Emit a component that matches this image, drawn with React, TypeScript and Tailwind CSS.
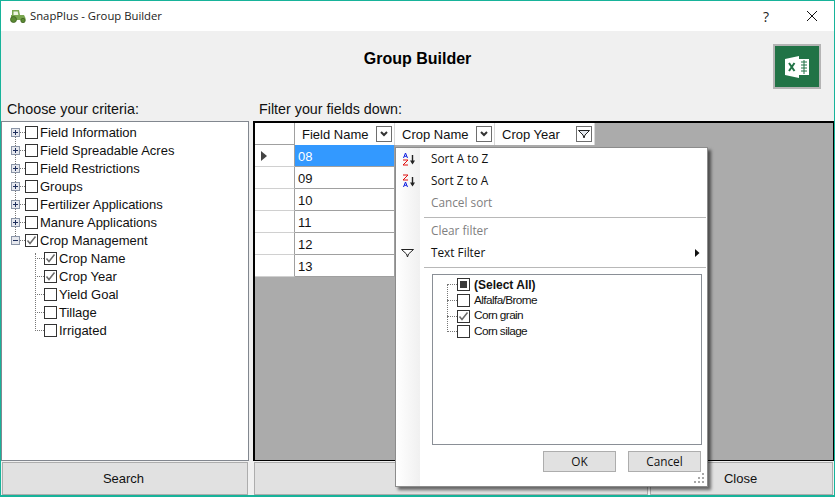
import React from 'react';

const sans = "font-['Liberation_Sans',Arial,sans-serif]";
const segoe = "font-['Open_Sans','Noto_Sans',sans-serif]";

function Check({ checked, square }: { checked?: boolean; square?: boolean }) {
    return (
        <span className="w-[13px] h-[13px] shrink-0 border border-[#333333] bg-white flex items-center justify-center">
            {checked && (
                <svg width="11" height="11" viewBox="0 0 11 11">
                    <path d="M1.5 5.5 L4 8.5 L9.5 1.5" fill="none" stroke="#6a6a6a" strokeWidth="1.5" />
                </svg>
            )}
            {square && <span className="w-[7px] h-[7px] bg-[#3a3a3a]" />}
        </span>
    );
}

function Expander({ open }: { open?: boolean }) {
    return (
        <span className="w-[9px] h-[9px] shrink-0 border border-[#8a94a6] bg-[#e6e8ee] relative">
            <span className="absolute left-[1px] top-[3px] w-[5px] h-[1px] bg-[#1f2f5c]" />
            {!open && <span className="absolute left-[3px] top-[1px] w-[1px] h-[5px] bg-[#1f2f5c]" />}
        </span>
    );
}

function TreeRow({ label, checked, open }: { label: string; checked?: boolean; open?: boolean }) {
    return (
        <div className="h-[18px] flex items-center">
            <Expander open={open} />
            <span className="w-[5px] shrink-0 border-t border-dotted border-[#777777]" />
            <Check checked={checked} />
            <span className="ml-[2px] pt-[2px] text-[#101010] whitespace-nowrap">{label}</span>
        </div>
    );
}

function SubRow({ label, checked }: { label: string; checked?: boolean }) {
    return (
        <div className="h-[18px] flex items-center pl-[24px]">
            <span className="w-[9px] shrink-0 border-t border-dotted border-[#777777]" />
            <Check checked={checked} />
            <span className="ml-[2px] pt-[2px] text-[#101010] whitespace-nowrap">{label}</span>
        </div>
    );
}

function DropBtn({ filter }: { filter?: boolean }) {
    return (
        <span className="w-[16px] h-[16px] shrink-0 border border-[#6e6e6e] bg-white flex items-center justify-center">
            {filter ? (
                <svg width="12" height="9" viewBox="0 0 12 9">
                    <path d="M0.5 0.5 H11.5 L7 5 L6 8 L5 5 Z" fill="#e4e8ee" stroke="#222222" strokeWidth="1" />
                </svg>
            ) : (
                <svg width="8" height="6" viewBox="0 0 8 6">
                    <path d="M1 1 L4 4 L7 1" fill="none" stroke="#333333" strokeWidth="2" />
                </svg>
            )}
        </span>
    );
}

function HeaderCell({ label, filter }: { label: string; filter?: boolean }) {
    return (
        <div className="w-[100px] h-[22px] bg-white border-r border-[#d8d8d8] flex items-center justify-between pl-[7px] pr-[2px]">
            <span className="pt-[2px] text-[#111111] whitespace-nowrap">{label}</span>
            <DropBtn filter={filter} />
        </div>
    );
}

function SortIcon({ reverse }: { reverse?: boolean }) {
    return (
        <svg width="14" height="14" viewBox="0 0 14 14">
            <path d={reverse ? "M1 1 H6 L1 6 H6" : "M1.5 6 L3.5 1 L5.5 6 M2.3 4.3 H4.7"} fill="none" stroke={reverse ? "#e01010" : "#1020e0"} strokeWidth="1" />
            <path d={reverse ? "M1.5 13 L3.5 8 L5.5 13 M2.3 11.3 H4.7" : "M1 8 H6 L1 13 H6"} fill="none" stroke={reverse ? "#1020e0" : "#e01010"} strokeWidth="1" />
            <path d="M10.5 3 V11" stroke="#222222" strokeWidth="1.4" />
            <path d="M8 8.5 H13 L10.5 12.5 Z" fill="#222222" />
        </svg>
    );
}

function FilterRow({ label, checked, square, bold }: { label: string; checked?: boolean; square?: boolean; bold?: boolean }) {
    return (
        <div className="h-[15.67px] flex items-center">
            <span className="w-[10px] shrink-0 border-t border-dotted border-[#777777]" />
            <Check checked={checked} square={square} />
            <span className={`ml-[4px] text-[11.8px] text-[#111111] whitespace-nowrap ${sans} ${bold ? 'font-bold text-[12px]' : 'tracking-[-0.6px]'}`}>{label}</span>
        </div>
    );
}

function FilterMenu() {
    return (
        <div className={`absolute left-[394px] top-[146px] w-[313px] h-[340px] bg-white border border-[#8c8c8c] shadow-[3px_3px_3px_rgba(0,0,0,0.55)] flex text-[11.8px] ${segoe}`}>
            <div className="w-[24px] h-[338px] bg-gradient-to-r from-white to-[#f0f0f0] flex flex-col items-center shrink-0">
                <div className="h-[22px] flex items-center pl-[1px]"><SortIcon /></div>
                <div className="h-[22px] flex items-center pl-[1px]"><SortIcon reverse /></div>
                <div className="h-[50px]" />
                <div className="h-[22px] flex items-center pr-[2px]">
                    <svg width="13" height="9" viewBox="0 0 13 9">
                        <path d="M0.5 0.5 H12.5 L7.5 5 L6.5 8 L5.5 5 Z" fill="#ffffff" stroke="#222222" strokeWidth="1" />
                    </svg>
                </div>
            </div>
            <div className="flex-1 flex flex-col pl-[8px] pr-[2px] relative">
                <div className="h-[22px] flex items-center pl-[3px] text-[#111111]">Sort A to Z</div>
                <div className="h-[22px] flex items-center pl-[3px] text-[#111111]">Sort Z to A</div>
                <div className="h-[22px] flex items-center pl-[3px] text-[#808080]">Cancel sort</div>
                <div className="h-[1px] mt-[3px] bg-[#b8b8b8] mr-[-1px] ml-[-4px]" />
                <div className="h-[22px] mt-[2px] flex items-center pl-[3px] text-[#808080]">Clear filter</div>
                <div className="h-[22px] flex items-center justify-between pl-[3px] pr-[5px] text-[#111111]">
                    Text Filter
                    <svg width="5" height="8" viewBox="0 0 5 8"><path d="M0 0 L4.5 4 L0 8 Z" fill="#111111" /></svg>
                </div>
                <div className="h-[1px] mt-[3px] bg-[#b8b8b8] mr-[-1px] ml-[-4px]" />
                <div className="relative mt-[6px] w-[270px] h-[171px] ml-[4px] border border-[#8a8f96] pl-[14px] pt-[2px]">
                    <span className="absolute left-[14px] top-[10px] h-[47px] border-l border-dotted border-[#777777]" />
                    <FilterRow label="(Select All)" square bold />
                    <FilterRow label="Alfalfa/Brome" />
                    <FilterRow label="Corn grain" checked />
                    <FilterRow label="Corn silage" />
                </div>
                <div className="flex justify-end gap-[12px] mt-[6px] pr-[4px]">
                    <button className="w-[73px] h-[21px] bg-[#e1e1e1] border border-[#adadad] text-[#111111]">OK</button>
                    <button className="w-[73px] h-[21px] bg-[#e1e1e1] border border-[#adadad] text-[#111111]">Cancel</button>
                </div>
            </div>
            <svg className="absolute right-[2px] bottom-[2px]" width="11" height="11" viewBox="0 0 11 11">
                <path d="M8 0h2v2H8zM4 4h2v2H4zM8 4h2v2H8zM0 8h2v2H0zM4 8h2v2H4zM8 8h2v2H8z" fill="#a8a8a8" />
            </svg>
        </div>
    );
}

export default function App() {
    const rows = ['08', '09', '10', '11', '12', '13'];

    return (
        <div className={`relative w-[835px] h-[497px] border border-[#17b39a] border-b-2 bg-[#f0f0f0] flex flex-col overflow-hidden text-[13px] ${sans}`}>
            <div className="h-[30px] bg-white flex items-center shrink-0">
                <svg className="ml-[8px] mt-[1px]" width="17" height="13" viewBox="0 0 17 13">
                    <path d="M3 0 H10 L11 5 H15 L16.5 8 V10 H2 V5 H3 Z" fill="#7aa650" />
                    <path d="M4.5 1.5 H8.7 L9.4 5 H4.5 Z" fill="#eef4e2" />
                    <circle cx="4.5" cy="9.5" r="3" fill="#5b8a33" stroke="#3c5f20" strokeWidth="0.8" />
                    <circle cx="14" cy="10.5" r="2.2" fill="#5b8a33" stroke="#3c5f20" strokeWidth="0.8" />
                </svg>
                <span className={`ml-[4px] text-[11.3px] text-[#222222] ${segoe}`}>SnapPlus - Group Builder</span>
                <span className={`ml-auto text-[14px] text-[#222222] ${segoe}`}>?</span>
                <svg className="ml-[37px] mr-[16px]" width="12" height="12" viewBox="0 0 12 12">
                    <path d="M1 1 L11 11 M11 1 L1 11" stroke="#111111" strokeWidth="1" />
                </svg>
            </div>

            <div className="h-[70px] shrink-0 relative flex items-center justify-center">
                <h1 className="text-[16px] font-bold text-black pb-[15px]">Group Builder</h1>
                <button className="absolute right-[13px] top-[13px] w-[48px] h-[45px] pl-[1px] border-2 border-[#b4b4b4] bg-[#217346] flex items-center justify-center">
                    <svg width="25" height="22" viewBox="0 0 25 22">
                        <path d="M14 3 H24 V19 H14 Z" fill="#ffffff" />
                        <path d="M16 6 H22 M16 9 H22 M16 12 H22 M16 15 H22 M19 4 V18" stroke="#217346" strokeWidth="1" />
                        <path d="M0 3 L14 0 V22 L0 19 Z" fill="#ffffff" />
                        <path d="M4 7 L9.5 15 M9.5 7 L4 15" stroke="#217346" strokeWidth="2" />
                    </svg>
                </button>
            </div>

            <div className="flex-1 flex min-h-0">
                <div className="w-[248px] flex flex-col shrink-0">
                    <div className="h-[20px] pl-[6px] pb-[2px] flex items-center text-[14.3px] text-[#111111]">Choose your criteria:</div>
                    <div className="relative h-[340px] bg-white border border-[#82878f] pl-[9px] pt-[1px]">
                        <span className="absolute left-[13px] top-[14px] h-[108px] border-l border-dotted border-[#777777]" />
                        <span className="absolute left-[33px] top-[131px] h-[78px] border-l border-dotted border-[#777777]" />
                        <TreeRow label="Field Information" />
                        <TreeRow label="Field Spreadable Acres" />
                        <TreeRow label="Field Restrictions" />
                        <TreeRow label="Groups" />
                        <TreeRow label="Fertilizer Applications" />
                        <TreeRow label="Manure Applications" />
                        <TreeRow label="Crop Management" checked open />
                        <SubRow label="Crop Name" checked />
                        <SubRow label="Crop Year" checked />
                        <SubRow label="Yield Goal" />
                        <SubRow label="Tillage" />
                        <SubRow label="Irrigated" />
                    </div>
                    <button className="h-[33px] mt-[1px] mx-[1px] pr-[3px] bg-[#e1e1e1] border border-[#adadad] text-[#111111]">Search</button>
                </div>

                <div className="flex-1 flex flex-col pl-[4px] min-w-0">
                    <div className="h-[20px] pl-[6px] pb-[2px] flex items-center text-[14.3px] text-[#111111]">Filter your fields down:</div>
                    <div className="h-[340px] bg-[#ababab] border border-black border-t-2 border-l-2">
                        <div className="flex">
                            <div className="w-[40px] h-[22px] bg-white border-r border-b border-[#a0a0a0]" />
                            <HeaderCell label="Field Name" />
                            <HeaderCell label="Crop Name" />
                            <HeaderCell label="Crop Year" filter />
                        </div>
                        {rows.map((row, i) => (
                            <div key={row} className="flex h-[22px]">
                                <div className="w-[40px] bg-white border-r border-[#a0a0a0] border-b border-b-[#d0d0d0] flex items-center pl-[6px]">
                                    {i === 0 && (
                                        <svg width="6" height="10" viewBox="0 0 6 10"><path d="M0 0 L6 5 L0 10 Z" fill="#444444" /></svg>
                                    )}
                                </div>
                                <div className={`w-[100px] border-r border-b border-[#a0a0a0] flex items-center pl-[3px] pt-[3px] ${i === 0 ? 'bg-[#3399ff] text-white' : 'bg-white text-[#111111]'}`}>
                                    {row}
                                </div>
                            </div>
                        ))}
                    </div>
                    <div className="h-[33px] flex gap-[2px] ml-[1px] mr-[1px] mt-[1px]">
                        <button className="w-[394px] bg-[#e1e1e1] border border-[#adadad]" />
                        <button className="flex-1 pr-[2px] bg-[#e1e1e1] border border-[#adadad] text-[#111111]">Close</button>
                    </div>
                </div>
            </div>

            <FilterMenu />
        </div>
    );
}
